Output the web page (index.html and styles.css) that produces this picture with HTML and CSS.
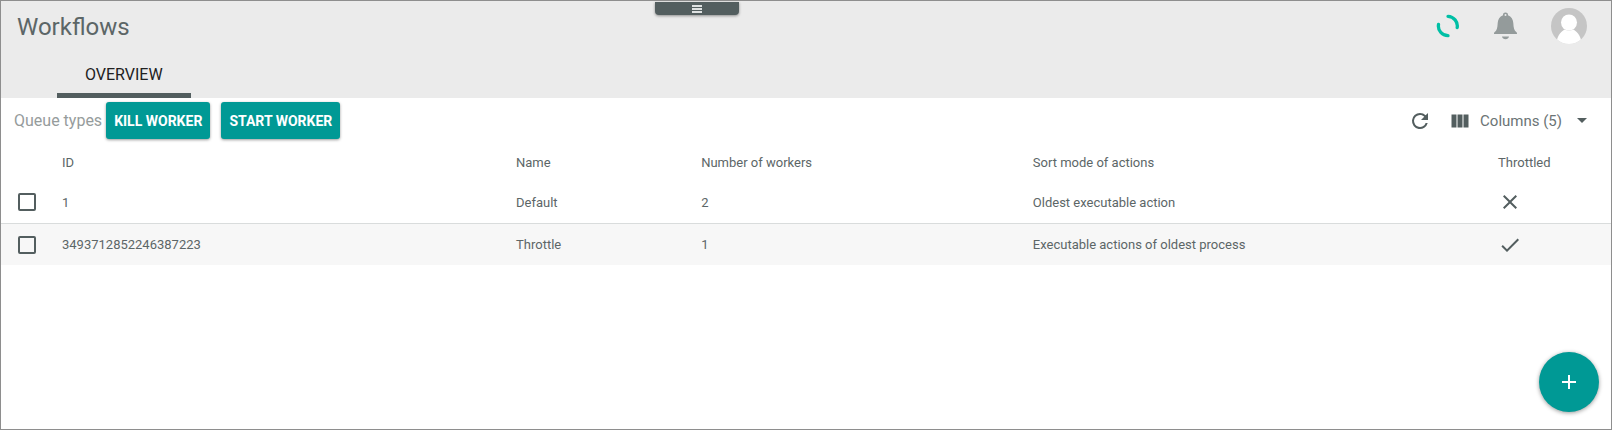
FILE: index.html
```
<!DOCTYPE html>
<html lang="en">
<head>
<meta charset="utf-8">
<title>Workflows</title>
<link rel="stylesheet" href="styles.css">
</head>
<body>
<div class="app">
  <button class="drawer-handle" type="button" aria-label="Open menu">
    <svg width="12" height="10" viewBox="0 0 12 10"><path d="M1 2h10M1 5h10M1 8h10" stroke="#dfe2e2" stroke-width="2"/></svg>
  </button>
  <header class="header">
    <div class="title-bar">
      <h1 class="title">Workflows</h1>
      <div class="header-actions">
        <svg class="spinner" width="24" height="24" viewBox="0 0 24 24" fill="none" stroke="#00bfa5" stroke-width="3.300" stroke-linecap="round"><path d="M13 2.300a9.700 9.700 0 0 1 9.200 11.200M13 21.700a9.700 9.700 0 0 1-9.500-11.200"/></svg>
        <button class="icon-button" type="button" aria-label="Notifications">
          <svg width="24" height="28" viewBox="0 0 24 28"><path fill="#949b9b" fill-rule="evenodd" d="M12.500 .5a2.500 2.500 0 0 1 2.500 2.700c3.500 1.200 5 4 5.300 7.800.3 4.700.7 7.500 3.200 9.300.5.400.5.700.5 1.700H1c0-1 0-1.300.5-1.700 2.500-1.800 2.900-4.600 3.200-9.300.3-3.800 1.800-6.600 5.300-7.800A2.500 2.500 0 0 1 12.500 .5zm0 1.500a1 1 0 1 0 0 2 1 1 0 0 0 0-2zM9 24.500h7c-.4 1.700-1.700 2.700-3.500 2.700S9.400 26.200 9 24.500z"/></svg>
        </button>
        <button class="icon-button" type="button" aria-label="Account">
          <svg width="36" height="36" viewBox="0 0 36 36"><defs><clipPath id="avatar"><circle cx="18" cy="18" r="18"/></clipPath></defs><g clip-path="url(#avatar)"><path fill="#c5c5c5" d="M0 0h36v36H0z"/><circle cx="18" cy="14.500" r="8" fill="#fff"/><path fill="#fff" d="M5.500 36c0-7 3.500-11.500 8-14.500 3 1.400 6 1.400 9 0 4.500 3 8 7.500 8 14.500z"/></g></svg>
        </button>
      </div>
    </div>
    <nav class="tabs"><button class="tab" type="button" aria-current="page">OVERVIEW</button></nav>
  </header>
  <main class="content">
    <div class="toolbar">
      <span class="toolbar-label">Queue types</span>
      <button class="action" type="button">KILL WORKER</button>
      <button class="action" type="button">START WORKER</button>
      <div class="table-tools">
        <button class="icon-button" type="button" aria-label="Refresh">
          <svg width="24" height="24" viewBox="0 0 24 24"><path fill="#535e5f" d="M17.650 6.350A7.960 7.960 0 0 0 12 4a8 8 0 1 0 7.730 10h-2.080A6 6 0 1 1 12 6c1.660 0 3.140.69 4.220 1.780L13 11h7V4z"/></svg>
        </button>
        <button class="columns-menu" type="button">
          <svg width="18" height="14" viewBox="0 0 18 14"><path fill="#535e5f" d="M.5 .5h5v13h-5zM6.500 .5h5v13h-5zM12.500 .5h5v13h-5z"/></svg>
          <span class="columns-text">Columns (5)</span>
          <svg width="10" height="5" viewBox="0 0 10 5"><path fill="#535e5f" d="M0 0h10L5 5z"/></svg>
        </button>
      </div>
    </div>
    <table class="queues">
      <colgroup><col class="col-check"><col class="col-id"><col class="col-name"><col class="col-workers"><col class="col-sort"><col></colgroup>
      <thead>
        <tr><td></td><th scope="col">ID</th><th scope="col">Name</th><th scope="col">Number of workers</th><th scope="col">Sort mode of actions</th><th scope="col">Throttled</th></tr>
      </thead>
      <tbody>
        <tr>
          <td class="check-cell"><input class="checkbox" type="checkbox" aria-label="Select Default"></td>
          <td>1</td><td>Default</td><td>2</td><td>Oldest executable action</td>
          <td class="state-cell"><svg role="img" aria-label="No" width="24" height="24" viewBox="0 0 24 24"><path fill="#535e5f" d="M19 6.410 17.590 5 12 10.590 6.410 5 5 6.410 10.590 12 5 17.590 6.410 19 12 13.410 17.590 19 19 17.590 13.410 12z"/></svg></td>
        </tr>
        <tr>
          <td class="check-cell"><input class="checkbox" type="checkbox" aria-label="Select Throttle"></td>
          <td>3493712852246387223</td><td>Throttle</td><td>1</td><td>Executable actions of oldest process</td>
          <td class="state-cell"><svg role="img" aria-label="Yes" width="24" height="24" viewBox="0 0 24 24"><path fill="#535e5f" d="M9 16.170 4.830 12l-1.420 1.410L9 19 21 7l-1.410-1.410z"/></svg></td>
        </tr>
      </tbody>
    </table>
  </main>
  <button class="fab" type="button" aria-label="Add queue">
    <svg width="24" height="24" viewBox="0 0 24 24"><path fill="#fff" d="M19 13h-6v6h-2v-6H5v-2h6V5h2v6h6z"/></svg>
  </button>
</div>
</body>
</html>
```
FILE: styles.css
```
* {
  box-sizing: border-box;
}

body {
  margin: 0;
  font-family: Roboto, sans-serif;
  color: #5c6667;
  background: #fff;
}

button {
  border: 0;
  padding: 0;
  background: none;
  font-family: inherit;
  color: inherit;
  cursor: pointer;
}

svg {
  display: block;
}

.app {
  position: relative;
  min-height: 100vh;
  border: 1px solid #8e8e8e;
}

.drawer-handle {
  position: absolute;
  top: 1px;
  left: 50%;
  width: 84px;
  height: 13px;
  margin-left: -151px;
  display: flex;
  align-items: center;
  justify-content: center;
  border-radius: 0 0 4px 4px;
  background: #535e5f;
  box-shadow: 0 1px 3px rgba(0, 0, 0, 0.4);
}

.header {
  background: #ebebeb;
}

.title-bar {
  display: flex;
  align-items: center;
  justify-content: space-between;
  height: 50px;
  padding: 0 24px 0 16px;
}

.title {
  margin: 0;
  padding-top: 2px;
  font-size: 24px;
  line-height: 28px;
  font-weight: 400;
}

.header-actions {
  display: flex;
  align-items: center;
  gap: 34px;
}

.tabs {
  display: flex;
  padding-left: 56px;
}

.tab {
  height: 47px;
  padding: 0 28px;
  border-top: 5px solid transparent;
  border-bottom: 5px solid #535e5f;
  font-size: 16px;
  line-height: 24px;
  color: #212121;
}

.toolbar {
  display: flex;
  align-items: center;
  height: 45px;
  padding: 0 24px 0 13px;
}

.toolbar-label {
  margin-right: 4px;
  font-size: 16px;
  color: #969c9c;
}

.action {
  height: 37px;
  margin-right: 11px;
  padding: 0 8px;
  border-radius: 3px;
  background: #009995;
  color: #fff;
  font-size: 14px;
  font-weight: 700;
  box-shadow: 0 1px 3px rgba(0, 0, 0, 0.4);
}

.table-tools {
  display: flex;
  align-items: center;
  gap: 19px;
  margin-left: auto;
}

.columns-menu {
  display: flex;
  align-items: center;
  font-size: 15px;
}

.columns-text {
  margin: 0 15px 0 11px;
  color: #6b7475;
}

.queues {
  width: 100%;
  table-layout: fixed;
  border-collapse: collapse;
  font-size: 13px;
  line-height: 16px;
}

.col-check {
  width: 61px;
}

.col-id {
  width: 28.2%;
}

.col-name {
  width: 11.5%;
}

.col-workers {
  width: 20.6%;
}

.col-sort {
  width: 28.9%;
}

.queues th,
.queues td {
  height: 42px;
  padding: 2px 0 0;
  text-align: left;
  font-weight: 400;
  vertical-align: middle;
}

.queues thead th,
.queues thead td {
  height: 38px;
}

.queues tbody tr + tr {
  border-top: 1px solid #d9dcdc;
  background: #f7f7f7;
}

.queues .check-cell {
  padding: 1px 0 0 17px;
}

.queues .state-cell {
  padding-top: 1px;
}

.checkbox {
  display: block;
  appearance: none;
  width: 18px;
  height: 18px;
  margin: 0;
  border: 2px solid #535e5f;
  border-radius: 2px;
}

.checkbox:checked {
  background: #535e5f;
}

.fab {
  position: fixed;
  right: 13px;
  bottom: 18px;
  width: 60px;
  height: 60px;
  display: flex;
  align-items: center;
  justify-content: center;
  border-radius: 50%;
  background: #009995;
  box-shadow: 0 1px 4px rgba(0, 0, 0, 0.4);
}
```
